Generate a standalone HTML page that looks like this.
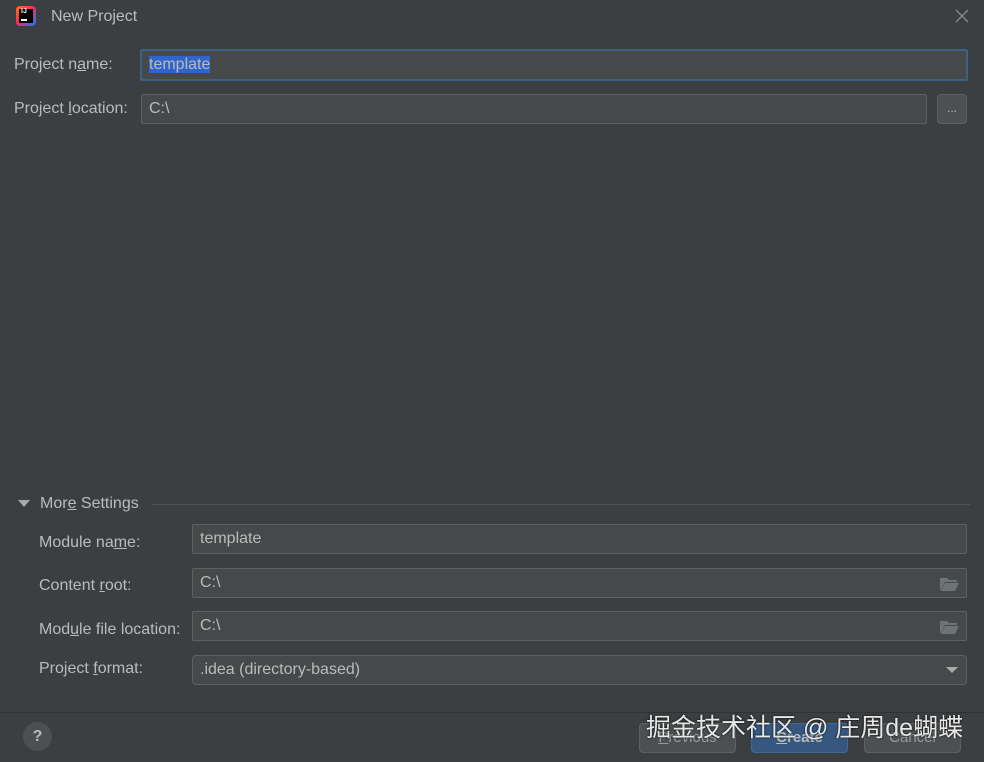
<!DOCTYPE html>
<html><head><meta charset="utf-8"><style>
*{box-sizing:border-box;margin:0;padding:0}
body{width:984px;height:762px;background:#3c3f41;font-family:"Liberation Sans","Noto Sans CJK SC",sans-serif;color:#bbbbbb;font-size:16px;position:relative;overflow:hidden}
.a{position:absolute}
.f{position:absolute;background:#45494a;border:1px solid #5e6060;height:30px;border-radius:2px;padding-left:7px;line-height:28px;color:#bbb;font-size:16px}
.l{position:absolute;font-size:16px;color:#bbb}
u{text-decoration:underline}
.btn{position:absolute;top:723px;height:30px;border-radius:4px;border:1px solid #5e6060;background:#4c5052;text-align:center;line-height:28px;color:#9a9a9a;font-size:15px}
.fold{position:absolute;right:7px;top:8px}
</style></head><body>
<div class="a" style="left:16px;top:6px;width:20px;height:20px;border-radius:4px;background:linear-gradient(135deg,#f97a12,#fe2857 45%,#087cfa)"></div>
<div class="a" style="left:19px;top:9px;width:14px;height:14px;background:#000"></div>
<div class="a" style="left:21px;top:8px;font-size:7px;color:#fff;font-weight:bold">IJ</div>
<div class="a" style="left:21px;top:19px;width:6px;height:1.5px;background:#fff"></div>
<div class="a" style="left:51px;top:8px;font-size:16px;color:#bbb">New Project</div>
<svg class="a" style="left:955px;top:9px" width="14" height="14"><path d="M1 1L13 13M13 1L1 13" stroke="#8a8a8a" stroke-width="1.3"/></svg>

<div class="l" style="left:14px;top:56px">Project n<u>a</u>me:</div>
<div class="f" style="left:140px;top:49px;width:828px;height:32px;border:2px solid #3d6185;padding-left:7px;line-height:28px"><span style="background:#2f65ca;color:#bbb">template</span></div>
<div class="l" style="left:14px;top:100px">Project <u>l</u>ocation:</div>
<div class="f" style="left:141px;top:94px;width:786px">C:\</div>
<div class="f" style="left:937px;top:94px;width:30px;border-radius:4px;background:#4c5052;padding:0;text-align:center;line-height:26px;font-size:12px">...</div>

<svg class="a" style="left:18px;top:500px" width="12" height="8"><path d="M0 0H12L6 7Z" fill="#aaa"/></svg>
<div class="l" style="left:40px;top:495px">Mor<u>e</u> Settings</div>
<div class="a" style="left:152px;top:504px;width:818px;height:1px;background:#4e5254"></div>

<div class="l" style="left:39px;top:534px">Module na<u>m</u>e:</div>
<div class="f" style="left:192px;top:524px;width:775px">template</div>
<div class="l" style="left:39px;top:577px">Content <u>r</u>oot:</div>
<div class="f" style="left:192px;top:568px;width:775px">C:\<svg class="fold" width="19" height="14"><path d="M0 1H7L9 3H17V5H5L1 13H0Z" fill="#6e7373"/><path d="M5 6H19L15 14H1Z" fill="#6e7373"/></svg></div>
<div class="l" style="left:39px;top:621px">Mod<u>u</u>le file location:</div>
<div class="f" style="left:192px;top:611px;width:775px">C:\<svg class="fold" width="19" height="14"><path d="M0 1H7L9 3H17V5H5L1 13H0Z" fill="#6e7373"/><path d="M5 6H19L15 14H1Z" fill="#6e7373"/></svg></div>
<div class="l" style="left:39px;top:660px">Project <u>f</u>ormat:</div>
<div class="f" style="left:192px;top:655px;width:775px;border-radius:4px">.idea (directory-based)
<svg class="a" style="right:8px;top:11px" width="12" height="8"><path d="M0 0H12L6 6Z" fill="#aaa"/></svg></div>

<div class="a" style="left:0;top:712px;width:984px;height:1px;background:#323232"></div>
<div class="a" style="left:23px;top:722px;width:29px;height:29px;border-radius:50%;background:#4c5052;color:#bbb;font-weight:bold;text-align:center;line-height:29px;font-size:16px">?</div>
<div class="btn" style="left:639px;width:97px"><u>P</u>revious</div>
<div class="btn" style="left:751px;width:97px;background:#365880;border-color:#43688f;color:#bbb;font-weight:bold"><u>C</u>reate</div>
<div class="btn" style="left:864px;width:97px">Cancel</div>
<div class="a" style="left:646px;top:708px;font-size:25px;color:#e8e8e8;white-space:nowrap;text-shadow:0 0 2px #000">掘金技术社区 @ 庄周de蝴蝶</div>
</body></html>
